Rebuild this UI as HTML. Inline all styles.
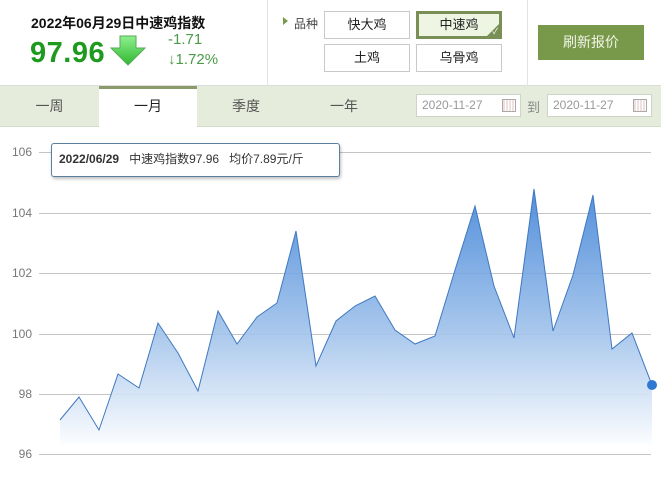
<!DOCTYPE html>
<html><head><meta charset="utf-8"><style>
*{margin:0;padding:0;box-sizing:border-box}
body{width:661px;height:484px;background:#fff;font-family:"Liberation Sans","Noto Sans CJK SC",sans-serif;position:relative;overflow:hidden;color:#333}
.a{position:absolute}
.btn{position:absolute;width:86px;height:28px;border:1px solid #c9c9c9;background:#fff;font-size:13px;text-align:center;line-height:26px;color:#222}
.tab{position:absolute;top:86px;height:40px;line-height:40px;font-size:14px;color:#555;text-align:center}
.date{position:absolute;top:94px;height:23px;width:105px;border:1px solid #cfd5c6;background:#fff;font-size:12px;color:#999;line-height:21px;padding-left:5px}
.cal{position:absolute;right:4px;top:4px;width:14px;height:13px;border:1px solid #a9a9a9;background:repeating-linear-gradient(90deg,#f0e0e0 0 2px,#fff 2px 3px)}
.yl{position:absolute;left:0;width:32px;text-align:right;font-size:12px;color:#777}
</style></head><body>
<div class="a" style="left:0;top:0;width:661px;height:86px;border-bottom:1px solid #dcdcdc"></div>
<div class="a" style="left:267px;top:0;width:1px;height:86px;background:#e3e3e3"></div>
<div class="a" style="left:527px;top:0;width:1px;height:86px;background:#e3e3e3"></div>
<div class="a" style="left:31px;top:13px;font-size:14px;font-weight:bold;color:#111">2022年06月29日中速鸡指数</div>
<div class="a" style="left:30px;top:37px;font-size:29px;font-weight:bold;color:#1e9a1e;letter-spacing:0.5px">97.96</div>
<svg class="a" style="left:110px;top:34px" width="36" height="34"><defs><linearGradient id="ga" x1="0" y1="0" x2="0" y2="1"><stop offset="0" stop-color="#8ef08e"/><stop offset="1" stop-color="#2fb82f"/></linearGradient></defs><path d="M8 2H24V14H33L16 31L-1 14H8Z" transform="translate(2,0)" fill="url(#ga)" stroke="#5aa85a" stroke-width="1"/></svg>
<div class="a" style="left:168px;top:31px;font-size:15px;color:#4a9a4a">-1.71</div>
<div class="a" style="left:168px;top:51px;font-size:15px;color:#4a9a4a">↓1.72%</div>
<div class="a" style="left:283px;top:17px;width:0;height:0;border-left:5px solid #7a9a4a;border-top:4px solid transparent;border-bottom:4px solid transparent"></div>
<div class="a" style="left:294px;top:15px;font-size:12px;color:#444">品种</div>
<div class="btn" style="left:324px;top:11px">快大鸡</div>
<div class="btn" style="left:416px;top:11px;border:3px solid #7a8f55;background:#eef5e2;line-height:22px">中速鸡<span style="position:absolute;right:-1px;bottom:-1px;width:0;height:0;border-left:14px solid transparent;border-bottom:14px solid #7a8f55"></span><span style="position:absolute;right:1px;bottom:-1px;font-size:8px;color:#fff;line-height:10px">✓</span></div>
<div class="btn" style="left:324px;top:44px">土鸡</div>
<div class="btn" style="left:416px;top:44px">乌骨鸡</div>
<div class="a" style="left:538px;top:25px;width:106px;height:35px;background:#78984a;color:#f0f5e8;font-size:14px;text-align:center;line-height:35px">刷新报价</div>
<div class="a" style="left:0;top:86px;width:661px;height:41px;background:#e6ecdc;border-bottom:1px solid #d6dccb"></div>
<div class="a" style="left:99px;top:86px;width:98px;height:41px;background:#fff;border-top:3px solid #8a9a6a"></div>
<div class="tab" style="left:0;width:99px">一周</div>
<div class="tab" style="left:99px;width:98px;color:#222">一月</div>
<div class="tab" style="left:197px;width:98px">季度</div>
<div class="tab" style="left:295px;width:98px">一年</div>
<div class="date" style="left:416px">2020-11-27<span class="cal"></span></div>
<div class="a" style="left:527px;top:97px;font-size:13px;color:#888">到</div>
<div class="date" style="left:547px">2020-11-27<span class="cal"></span></div>
<div class="yl" style="top:145px">106</div>
<div class="yl" style="top:206px">104</div>
<div class="yl" style="top:266px">102</div>
<div class="yl" style="top:327px">100</div>
<div class="yl" style="top:387px">98</div>
<div class="yl" style="top:447px">96</div>
<svg class="a" style="left:0;top:0" width="661" height="484">
<defs><linearGradient id="gf" x1="0" y1="180" x2="0" y2="450" gradientUnits="userSpaceOnUse"><stop offset="0" stop-color="#3a7fd6"/><stop offset="0.55" stop-color="#9dc0ea"/><stop offset="1" stop-color="#ffffff"/></linearGradient></defs>
<g stroke="#c4c4c4" stroke-width="1">
<line x1="39" y1="152.5" x2="651" y2="152.5"/><line x1="39" y1="213.5" x2="651" y2="213.5"/><line x1="39" y1="273.5" x2="651" y2="273.5"/><line x1="39" y1="334.5" x2="651" y2="334.5"/><line x1="39" y1="394.5" x2="651" y2="394.5"/><line x1="39" y1="454.5" x2="651" y2="454.5"/></g>
<path d="M60 420L79 397L99 430L118 374L139 388L158 323L178 353L198 391L218 311L237 344L257 317L277 303L296 231L316 366L336 321L355 306L375 296L395 330L415 344L435 336L455 270L475 206L494 286L514 338L534 189L553 331L573 275L593 195L612 349L632 333L652 385L652 444L60 444Z" fill="url(#gf)" fill-opacity="0.9"/>
<path d="M60 420L79 397L99 430L118 374L139 388L158 323L178 353L198 391L218 311L237 344L257 317L277 303L296 231L316 366L336 321L355 306L375 296L395 330L415 344L435 336L455 270L475 206L494 286L514 338L534 189L553 331L573 275L593 195L612 349L632 333L652 385" fill="none" stroke="#3f78c0" stroke-width="1"/>
<circle cx="652" cy="385" r="5" fill="#2f78d2"/>
</svg>
<div class="a" style="left:51px;top:143px;width:289px;height:34px;background:#fff;border:1px solid #5a7fa0;border-radius:3px;box-shadow:1px 2px 3px rgba(0,0,0,0.25);font-size:12px;line-height:30px;padding-left:7px;color:#333;white-space:nowrap"><b>2022/06/29</b>&nbsp;&nbsp;&nbsp;中速鸡指数97.96&nbsp;&nbsp;&nbsp;均价7.89元/斤</div>
</body></html>
